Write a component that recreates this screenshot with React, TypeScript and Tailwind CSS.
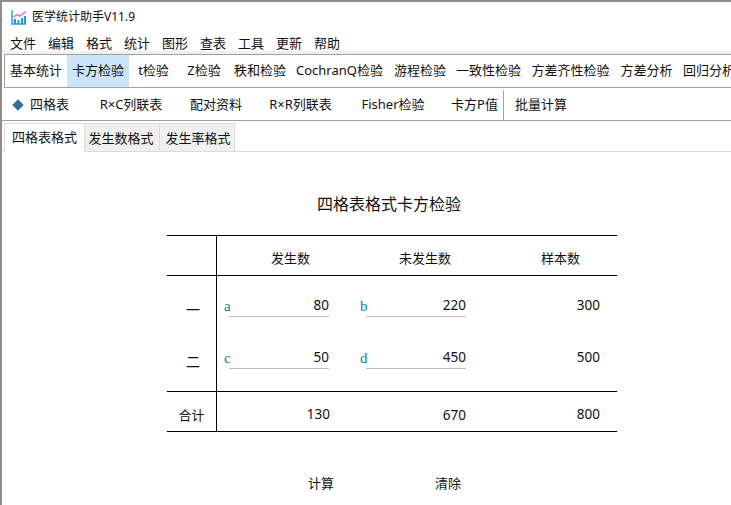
const menus = ["文件", "编辑", "格式", "统计", "图形", "查表", "工具", "更新", "帮助"];

const tests = [
  { label: "基本统计", width: "w-[62px]" },
  { label: "卡方检验", width: "w-[62px]", active: true },
  { label: "t检验", width: "w-[49px]" },
  { label: "Z检验", width: "w-[52px]" },
  { label: "秩和检验", width: "w-[60px]" },
  { label: "CochranQ检验", width: "w-[99px]" },
  { label: "游程检验", width: "w-[62px]" },
  { label: "一致性检验", width: "w-[75px]" },
  { label: "方差齐性检验", width: "w-[89px]" },
  { label: "方差分析", width: "w-[63px]" },
  { label: "回归分析", width: "w-[62px]" },
];

const subTests = [
  { label: "R×C列联表", width: "w-[80px]" },
  { label: "配对资料", width: "w-[90px]" },
  { label: "R×R列联表", width: "w-[79px]" },
  { label: "Fisher检验", width: "w-[106px]" },
  { label: "卡方P值", width: "w-[57px]" },
];

function ChartLogo() {
  return (
    <svg width="16" height="16" viewBox="0 0 16 16" className="shrink-0">
      <path d="M1 1v14h14" fill="none" stroke="#1e9be8" strokeWidth="1.4" />
      <path d="M3 15V10h2v5zM6.5 15V11h2v4zM10 15V9h2v6zM13 15V7h2v8z" fill="#1e9be8" />
      <path d="M2.5 8 6 5.5l3 1.5L15 2.5" fill="none" stroke="#e06ad0" strokeWidth="1.5" />
    </svg>
  );
}

function InputCell({ letter, value, gap }: { letter: string; value: string; gap: string }) {
  return (
    <div className="flex items-end h-[41px] pl-[7px]">
      <span className={`${gap} mb-[2px] font-['Liberation_Serif',serif] text-[15px] leading-[18px] text-[#008b8b]`}>{letter}</span>
      <div className="w-[100px] h-[21px] border-b border-[#bdbdbd] text-right text-[13.5px] leading-[18px]">{value}</div>
    </div>
  );
}

export default function App() {
  return (
    <div className="w-[731px] h-[505px] overflow-hidden bg-white text-[13px] text-[#111] font-['Noto_Sans','Noto_Sans_CJK_SC',sans-serif] border-t-2 border-l-2 border-[#8c8c8c]">
      <div className="flex items-center h-[30px] pl-[9px] gap-[5px] text-[12px]">
        <ChartLogo />
        <span>医学统计助手V11.9</span>
      </div>
      <div className="flex items-center h-[19px] pt-[5px] pl-[8px] gap-[10px]">
        {menus.map((m) => (
          <span key={m} className="w-[28px] whitespace-nowrap">{m}</span>
        ))}
      </div>
      <div className="h-[3px] bg-[#f0f0f0]" />
      <div className="flex items-stretch h-[34px] ml-[2px] border-y border-l border-[#a0a0a0] overflow-hidden">
        {tests.map((t) => (
          <div
            key={t.label}
            className={`${t.width} shrink-0 flex items-center justify-center whitespace-nowrap ${t.active ? "bg-[#cce4f7]" : ""}`}
          >
            {t.label}
          </div>
        ))}
      </div>
      <div className="flex items-center h-[33px] pt-[2px] pl-[11px] border-b border-[#a0a0a0]">
        <span className="w-[10px] h-[10px] flex items-center justify-center">
          <span className="w-[8px] h-[8px] rotate-45 bg-[#2f6f9f]" />
        </span>
        <span className="w-[68px] text-center pr-[15px]">四格表</span>
        {subTests.map((t) => (
          <span key={t.label} className={`${t.width} shrink-0 text-center whitespace-nowrap`}>{t.label}</span>
        ))}
        <span className="h-[30px] border-l border-[#a0a0a0] pl-[11px] flex items-center">批量计算</span>
      </div>
      <div className="flex items-end h-[31px] pl-[2px] border-b border-[#dcdcdc]">
        <div className="h-[29px] w-[81px] flex items-center justify-center bg-white border-t border-x border-[#dcdcdc] -mb-px">四格表格式</div>
        <div className="h-[28px] w-[75px] flex items-center justify-center bg-[#f0f0f0] border-t border-r border-[#dcdcdc] pt-[2px] pr-[2px]">发生数格式</div>
        <div className="h-[28px] w-[75px] flex items-center justify-center bg-[#f0f0f0] border-t border-r border-[#dcdcdc] pt-[2px] pl-[2px]">发生率格式</div>
      </div>
      <div className="flex justify-center pl-[47px] -ml-[2px]">
        <h1 className="mt-[40px] h-[24px] text-[16px] leading-[24px] font-normal">四格表格式卡方检验</h1>
      </div>
      <div className="w-[450px] ml-[165px] mt-[19px] border-y border-black">
        <div className="grid grid-cols-[50px_136px_136px_128px] h-[40px] items-center border-b border-black">
          <div className="h-full border-r border-black" />
          <div className="text-center pl-[11px] pt-[6px]">发生数</div>
          <div className="text-center pl-[8px] pt-[6px]">未发生数</div>
          <div className="text-center pl-[15px] pt-[6px]">样本数</div>
        </div>
        <div className="grid grid-cols-[50px_136px_136px_128px] h-[116px] border-b border-black">
          <div className="border-r border-black flex flex-col items-center gap-[11px] pl-[3px]">
            <div className="h-[41px] flex items-end text-[14px] leading-[14px]">一</div>
            <div className="h-[41px] flex items-end text-[14px] leading-[14px]">二</div>
          </div>
          <div className="flex flex-col gap-[11px]">
            <InputCell letter="a" value="80" gap="w-[5px]" />
            <InputCell letter="c" value="50" gap="w-[5px]" />
          </div>
          <div className="flex flex-col gap-[11px]">
            <InputCell letter="b" value="220" gap="w-[6px]" />
            <InputCell letter="d" value="450" gap="w-[6px]" />
          </div>
          <div className="flex flex-col gap-[11px] pr-[17px] text-[13.5px]">
            <div className="h-[41px] flex items-end justify-end pb-[2px]">300</div>
            <div className="h-[41px] flex items-end justify-end pb-[2px]">500</div>
          </div>
        </div>
        <div className="grid grid-cols-[50px_136px_136px_128px] h-[39px] items-center text-[13.5px]">
          <div className="h-full border-r border-black flex items-center justify-center pt-[8px] text-[13px]">合计</div>
          <div className="text-right pr-[23px] pt-[5px]">130</div>
          <div className="text-right pr-[23px] pt-[8px]">670</div>
          <div className="text-right pr-[17px] pt-[5px]">800</div>
        </div>
      </div>
      <div className="flex mt-[42px] h-[20px] items-center">
        <button className="ml-[305px] w-[28px] text-center">计算</button>
        <button className="ml-[99px] w-[28px] text-center">清除</button>
      </div>
    </div>
  );
}
